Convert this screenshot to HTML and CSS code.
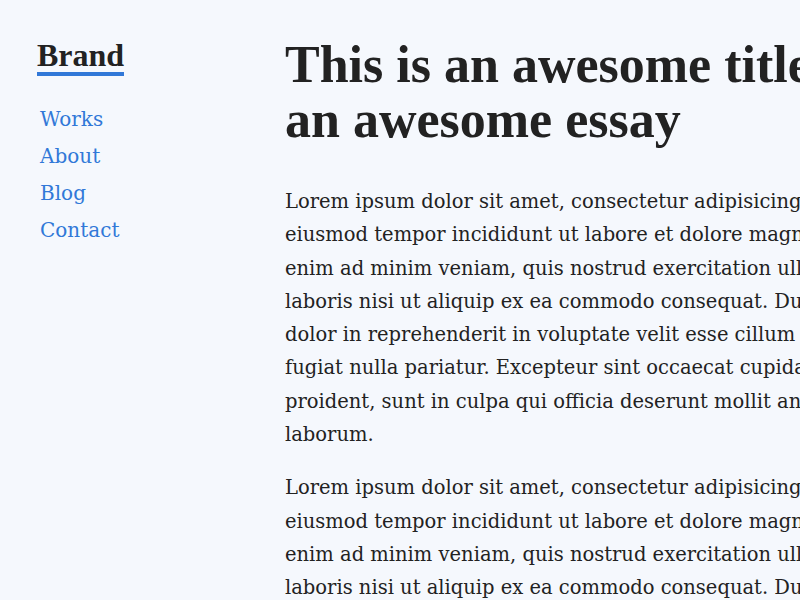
FILE: index.html
```html
<!DOCTYPE html>
<html lang="en">
<head>
  <meta charset="UTF-8">
  <title>An awesome essay</title>
  <meta name="viewport" content="width=device-width, initial-scale=1.0">
  <link rel="stylesheet" href="styles.css">
</head>
<body>

  <div class="page">
    <aside class="sidebar">
      <a href="#" class="brand">Brand</a>
      <nav class="nav">
        <a href="#">Works</a>
        <a href="#">About</a>
        <a href="#">Blog</a>
        <a href="#">Contact</a>
      </nav>
    </aside>

    <main class="essay">
      <h1>This is an awesome title for an awesome essay</h1>
      <p>Lorem ipsum dolor sit amet, consectetur adipisicing elit, sed do eiusmod tempor incididunt ut labore et dolore magna aliqua. Ut enim ad minim veniam, quis nostrud exercitation ullamco laboris nisi ut aliquip ex ea commodo consequat. Duis aute irure dolor in reprehenderit in voluptate velit esse cillum dolore eu fugiat nulla pariatur. Excepteur sint occaecat cupidatat non proident, sunt in culpa qui officia deserunt mollit anim id est laborum.</p>
      <p>Lorem ipsum dolor sit amet, consectetur adipisicing elit, sed do eiusmod tempor incididunt ut labore et dolore magna aliqua. Ut enim ad minim veniam, quis nostrud exercitation ullamco laboris nisi ut aliquip ex ea commodo consequat. Duis aute irure dolor in reprehenderit in voluptate velit esse cillum dolore eu fugiat nulla pariatur. Excepteur sint occaecat cupidatat non proident, sunt in culpa qui officia deserunt mollit anim id est laborum.</p>
    </main>
  </div>

</body>
</html>
```

FILE: styles.css
```css
html {
  overflow: hidden;
}
body {
  background-color: #f5f8fd;
  margin: 0;
  font-family: "DejaVu Serif", serif;
  color: #222;
}
.page {
  display: flex;
}
.sidebar {
  width: 285px;
  flex-shrink: 0;
  padding: 38px 0 0 37px;
  box-sizing: border-box;
}
.brand {
  display: inline-block;
  font-family: "Liberation Serif", serif;
  font-size: 32px;
  font-weight: bold;
  line-height: 34px;
  color: #222;
  text-decoration: none;
  border-bottom: 4px solid #3178d8;
}
.nav {
  display: flex;
  flex-direction: column;
  margin-top: 25px;
  padding-left: 3px;
}
.nav a {
  font-size: 20px;
  line-height: 37px;
  color: #3178d8;
  text-decoration: none;
}
.essay {
  width: 641px;
  flex-shrink: 0;
  padding-top: 37px;
}
.essay h1 {
  font-family: "Liberation Serif", serif;
  font-size: 52px;
  line-height: 55px;
  max-width: 640px;
  margin: 0 0 38px;
}
.essay p {
  font-size: 19.5px;
  line-height: 33.3px;
  margin: 0 0 20px;
}
```
